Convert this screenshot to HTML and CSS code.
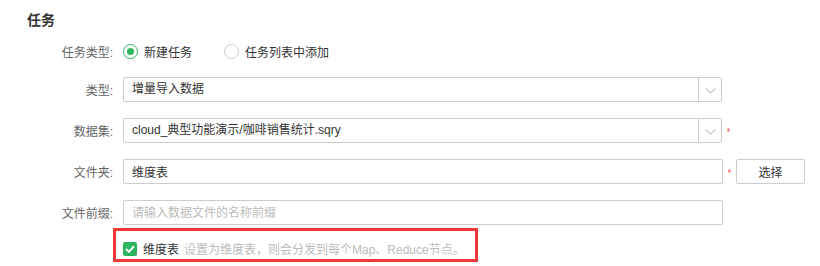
FILE: index.html
```html
<!DOCTYPE html>
<html lang="zh-CN">
<head>
    <meta charset="UTF-8">
    <meta name="viewport" content="width=device-width, initial-scale=1.0">
    <title>任务</title>
    <link rel="stylesheet" href="styles.css">
</head>
<body>
    <div class="panel">
        <h2 class="title">任务</h2>
        <form class="task-form">
            <div class="row row-radio">
                <label class="label">任务类型:</label>
                <div class="radios">
                    <span class="radio checked"><i class="dot"></i>新建任务</span>
                    <span class="radio"><i class="dot"></i>任务列表中添加</span>
                </div>
            </div>
            <div class="row">
                <label class="label">类型:</label>
                <div class="select">
                    <span class="select-text">增量导入数据</span>
                    <span class="select-arrow">
                        <svg width="11" height="6" viewBox="0 0 11 6"><path d="M0.5 0.5 L5.5 5 L10.5 0.5" fill="none" stroke="#c8c8c8" stroke-width="1.2"/></svg>
                    </span>
                </div>
            </div>
            <div class="row">
                <label class="label">数据集:</label>
                <div class="select">
                    <span class="select-text">cloud_典型功能演示/咖啡销售统计.sqry</span>
                    <span class="select-arrow">
                        <svg width="11" height="6" viewBox="0 0 11 6"><path d="M0.5 0.5 L5.5 5 L10.5 0.5" fill="none" stroke="#c8c8c8" stroke-width="1.2"/></svg>
                    </span>
                </div>
                <span class="required">*</span>
            </div>
            <div class="row">
                <label class="label">文件夹:</label>
                <input class="input" type="text" value="维度表">
                <span class="required">*</span>
                <button class="btn" type="button">选择</button>
            </div>
            <div class="row">
                <label class="label">文件前缀:</label>
                <input class="input" type="text" placeholder="请输入数据文件的名称前缀">
            </div>
            <div class="highlight">
                <span class="checkbox">
                    <svg width="10" height="8" viewBox="0 0 10 8"><path d="M1 4 L4 6.8 L9 1.2" fill="none" stroke="#fff" stroke-width="2"/></svg>
                </span>
                <span class="check-label">维度表</span>
                <span class="hint">设置为维度表，则会分发到每个Map、Reduce节点。</span>
            </div>
        </form>
    </div>
</body>
</html>
```

FILE: styles.css
```css
/* Reset default styles */
* {
  box-sizing: border-box;
  margin: 0;
  padding: 0;
}

body {
  font-family: "Liberation Sans", "Noto Sans CJK SC", sans-serif;
  font-size: 12px;
  color: #333;
  background-color: #fff;
}

.panel {
  padding: 10px 0 0 27px;
}

.title {
  font-size: 14px;
  font-weight: bold;
  line-height: 20px;
  height: 20px;
  color: #333;
}

.task-form {
  margin-left: -19px;
}

.row {
  display: flex;
  align-items: center;
  height: 25px;
  margin-top: 16px;
}

.row-radio {
  height: 26px;
  margin-top: 8px;
  margin-bottom: -3px;
}

.label {
  width: 115px;
  padding-right: 10px;
  text-align: right;
  color: #666;
  flex-shrink: 0;
}

/* Radio buttons */
.radios {
  display: flex;
  gap: 32px;
}

.radio {
  display: flex;
  align-items: center;
  gap: 6px;
  color: #333;
}

.radio .dot {
  width: 15px;
  height: 15px;
  border: 1px solid #ccc;
  border-radius: 50%;
  display: flex;
  align-items: center;
  justify-content: center;
}

.radio.checked .dot {
  border-color: #2bb55f;
}

.radio.checked .dot::after {
  content: "";
  width: 7px;
  height: 7px;
  border-radius: 50%;
  background-color: #2bb55f;
}

/* Select boxes */
.select {
  display: flex;
  width: 599px;
  height: 25px;
  border: 1px solid #ccc;
  border-radius: 2px;
}

.select-text {
  flex: 1;
  padding-left: 8px;
  line-height: 23px;
}

.select-arrow {
  width: 23px;
  border-left: 1px solid #ccc;
  display: flex;
  align-items: center;
  justify-content: center;
  padding-top: 2px;
}

.input {
  width: 600px;
  height: 25px;
  border: 1px solid #ccc;
  border-radius: 2px;
  padding-left: 8px;
  font-family: inherit;
  font-size: 12px;
  color: #333;
  outline: none;
}

.input::placeholder {
  color: #bbb;
}

.required {
  color: #f55;
  font-size: 10px;
  width: 13px;
  text-align: center;
  padding-top: 3px;
}

.btn {
  width: 69px;
  height: 25px;
  border: 1px solid #ccc;
  border-radius: 2px;
  background-color: #fff;
  font-family: inherit;
  font-size: 12px;
  color: #333;
}

/* Dimension table option */
.highlight {
  display: flex;
  align-items: center;
  width: 365px;
  height: 34px;
  margin: 3px 0 0 105px;
  padding: 7px 0 0 7px;
  border: 3px solid #f0383b;
}

.checkbox {
  width: 14px;
  height: 14px;
  border-radius: 2px;
  background-color: #2bb55f;
  display: flex;
  align-items: center;
  justify-content: center;
}

.check-label {
  margin-left: 6px;
  color: #333;
}

.hint {
  margin-left: 5px;
  color: #bbb;
}
```
